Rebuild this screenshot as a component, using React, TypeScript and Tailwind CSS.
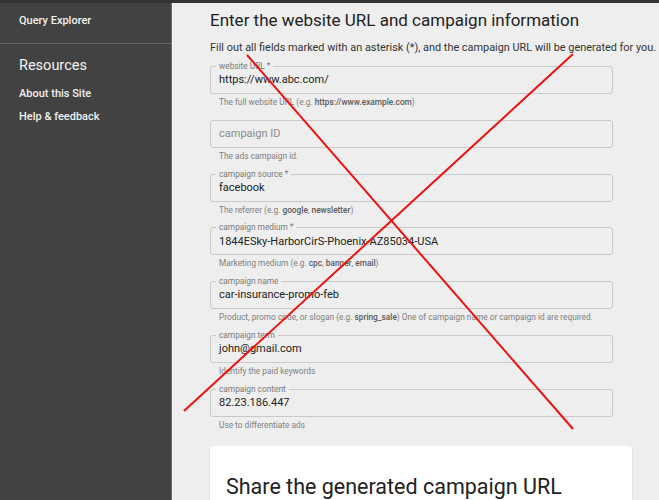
import React from 'react'

type Field = {
  label?: string
  value?: string
  placeholder?: string
  helper: React.ReactNode
}

const B = ({ children }: { children: React.ReactNode }) => (
  <span className="font-medium text-[#5a5a5a]">{children}</span>
)

const fields: Field[] = [
  {
    label: 'website URL *',
    value: 'https://www.abc.com/',
    helper: (
      <>
        The full website URL (e.g. <B>https://www.example.com</B>)
      </>
    ),
  },
  { placeholder: 'campaign ID', helper: 'The ads campaign id.' },
  {
    label: 'campaign source *',
    value: 'facebook',
    helper: (
      <>
        The referrer (e.g. <B>google</B>, <B>newsletter</B>)
      </>
    ),
  },
  {
    label: 'campaign medium *',
    value: '1844ESky-HarborCirS-Phoenix-AZ85034-USA',
    helper: (
      <>
        Marketing medium (e.g. <B>cpc</B>, <B>banner</B>, <B>email</B>)
      </>
    ),
  },
  {
    label: 'campaign name',
    value: 'car-insurance-promo-feb',
    helper: (
      <>
        Product, promo code, or slogan (e.g. <B>spring_sale</B>) One of campaign name or campaign id are required.
      </>
    ),
  },
  { label: 'campaign term', value: 'john@gmail.com', helper: 'Identify the paid keywords' },
  { label: 'campaign content', value: '82.23.186.447', helper: 'Use to differentiate ads' },
]

function OutlinedField({ field }: { field: Field }) {
  return (
    <div className="w-[403px]">
      <div className="relative h-[28px] rounded-[3px] border border-[#c9c9c9] flex items-center px-[8px] pt-[1px]">
        {field.label && (
          <span className="absolute left-[5px] top-[-6px] px-[3px] bg-[#eeeeee] text-[8.3px] leading-[10px] text-[#7a7a7a]">
            {field.label}
          </span>
        )}
        {field.value ? (
          <span className="text-[11px] text-[#222]">{field.value}</span>
        ) : (
          <span className="text-[11px] text-[#8a8a8a]">{field.placeholder}</span>
        )}
      </div>
      <div className="h-[25.8px] pt-[3px] pl-[9px] text-[8.3px] leading-[10px] text-[#808080] whitespace-nowrap">
        {field.helper}
      </div>
    </div>
  )
}

export default function App() {
  return (
    <div
      className="relative w-[659px] h-[500px] overflow-hidden bg-[#eeeeee] flex flex-col"
      style={{ fontFamily: 'Roboto, "Liberation Sans", sans-serif' }}
    >
      <div className="h-[3px] bg-[#333333] shrink-0" />
      <div className="flex flex-1 min-h-0">
        {/* sidebar */}
        <aside className="w-[172px] shrink-0 bg-[#424242] border-r border-[#6a6a6a] text-white">
          <div className="h-[40px] pl-[19px] pt-[10px] text-[11px] font-medium text-[#f0f0f0]">Query Explorer</div>
          <div className="h-px bg-[#666666]" />
          <div className="pl-[19px] pt-[11px] text-[14.5px] text-[#f5f5f5]">Resources</div>
          <div className="pl-[19px] pt-[9px] text-[11px] font-medium text-[#f0f0f0]">About this Site</div>
          <div className="pl-[19px] pt-[7px] text-[11px] font-medium text-[#f0f0f0]">Help &amp; feedback</div>
        </aside>

        {/* main */}
        <main className="flex-1 min-w-0 overflow-hidden border-l border-[#f7f7f7] pl-[37px]">
          <h1 className="pt-[5px] text-[17px] leading-[24px] text-[#222] whitespace-nowrap">
            Enter the website URL and campaign information
          </h1>
          <p className="pt-[9px] text-[10.9px] leading-[14px] text-[#333] whitespace-nowrap">
            Fill out all fields marked with an asterisk (*), and the campaign URL will be generated for you.
          </p>
          <div className="pt-[11px] flex flex-col">
            {fields.map((f, i) => (
              <OutlinedField key={i} field={f} />
            ))}
          </div>
          <div className="mt-[3px] w-[422px] h-[80px] bg-white rounded-[3px] shadow-[0_1px_2px_rgba(0,0,0,0.15)] px-[16px] pt-[27px]">
            <h2 className="text-[21.5px] leading-[28px] text-[#222] whitespace-nowrap">Share the generated campaign URL</h2>
          </div>
        </main>
      </div>

      {/* red cross drawn over the screenshot */}
      <svg className="absolute inset-0 pointer-events-none" width="659" height="500" viewBox="0 0 659 500">
        <line x1="247" y1="55" x2="573" y2="429" stroke="#ee1111" strokeWidth="2" />
        <line x1="573" y1="54" x2="184" y2="411" stroke="#ee1111" strokeWidth="2" />
      </svg>
    </div>
  )
}
